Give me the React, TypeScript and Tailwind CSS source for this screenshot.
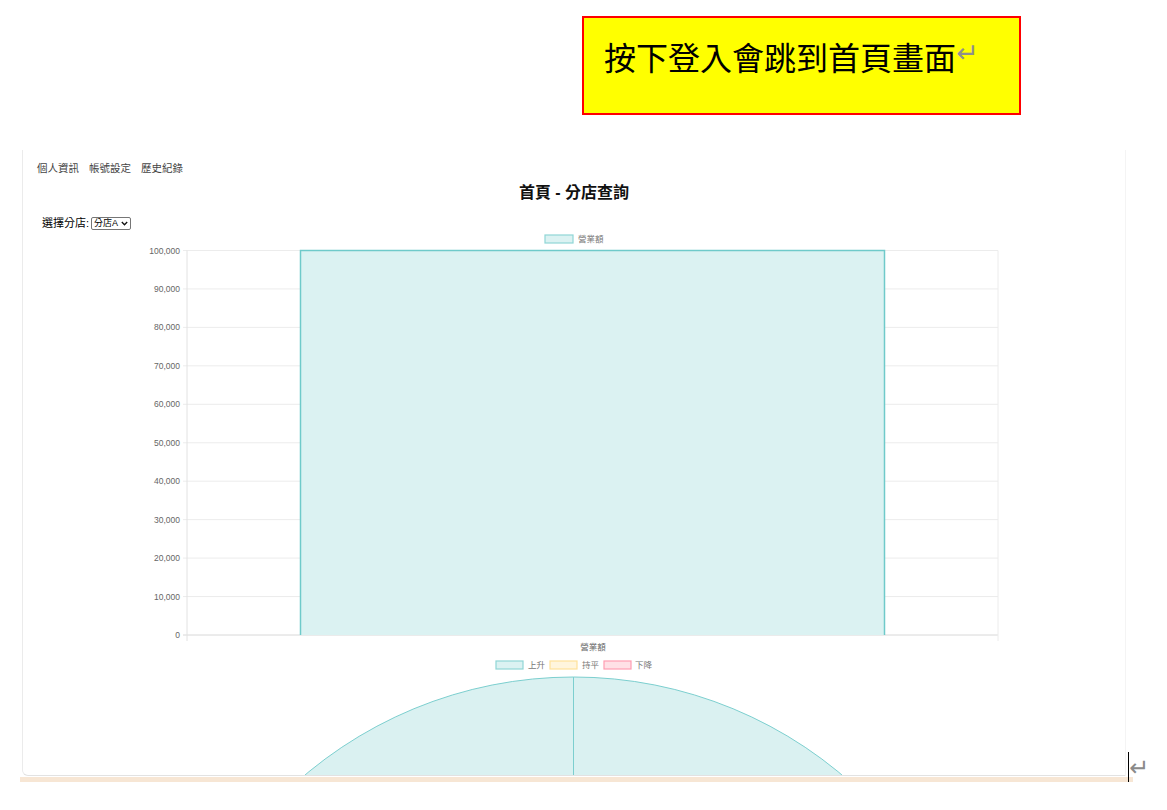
import React from 'react';

const FONT = '"Liberation Sans", "Noto Sans CJK TC", sans-serif';

// y-axis ticks, top to bottom
const ticks = ['100,000', '90,000', '80,000', '70,000', '60,000', '50,000', '40,000', '30,000', '20,000', '10,000', '0'];

const SalesChart: React.FC = () => {
  const top = 20.5;
  const step = 38.45;
  const bottom = top + step * 10;

  return (
    <svg width="1101" height="546" className="block" style={{ fontFamily: FONT }}>
      {/* legend */}
      <rect x="522" y="5" width="28" height="8" fill="#dbf2f2" stroke="#8fd6d6" strokeWidth="1.2" />
      <text x="555" y="12" fontSize="8.5" fill="#777">營業額</text>

      {/* grid */}
      {ticks.map((t, i) => {
        const y = top + i * step;
        return (
          <g key={t}>
            <line x1="160" x2="975" y1={y} y2={y} stroke={i === 10 ? '#d8d8d8' : '#ececec'} strokeWidth="1" />
            <text x="157" y={y + 3} fontSize="8.5" fill="#666" textAnchor="end">{t}</text>
          </g>
        );
      })}
      <line x1="164" x2="164" y1={top} y2={bottom + 6} stroke="#e2e2e2" strokeWidth="1" />
      <line x1="975" x2="975" y1={top} y2={bottom + 6} stroke="#ececec" strokeWidth="1" />

      {/* bar */}
      <rect x="277.5" y={top} width="584" height={bottom - top} fill="#dbf2f2" />
      <path d={`M277.5 ${bottom} V${top} H861.5 V${bottom}`} fill="none" stroke="#6fcaca" strokeWidth="1.5" />

      <text x="570" y="420" fontSize="8.5" fill="#666" textAnchor="middle">營業額</text>

      {/* pie legend */}
      <rect x="473" y="431" width="27" height="8" fill="#dbf2f2" stroke="#8fd6d6" strokeWidth="1.2" />
      <text x="505" y="438" fontSize="8.5" fill="#777">上升</text>
      <rect x="527" y="431" width="27" height="8" fill="#fff5dd" stroke="#ffe19a" strokeWidth="1.2" />
      <text x="559" y="438" fontSize="8.5" fill="#777">持平</text>
      <rect x="581" y="431" width="27" height="8" fill="#ffe0e6" stroke="#ff9db2" strokeWidth="1.2" />
      <text x="612" y="438" fontSize="8.5" fill="#777">下降</text>

      {/* pie */}
      <circle cx="550.5" cy="864" r="417" fill="#daf1f1" stroke="#7ccfcf" strokeWidth="1" />
      <line x1="550.5" x2="550.5" y1="447" y2="864" stroke="#7ccfcf" strokeWidth="1" />
    </svg>
  );
};

export default function App() {
  return (
    <div className="relative w-[1167px] h-[810px] overflow-hidden bg-white" style={{ fontFamily: FONT }}>
      {/* note box */}
      <div className="pt-[16px] pl-[582px]">
        <div className="w-[439px] h-[99px] border-2 border-[#ff0000] bg-[#ffff00] pl-[20px] pt-[21px]">
          <div className="flex items-center text-[32px] leading-[34px] text-black">
            <span style={{ fontFamily: '"Noto Sans CJK TC", serif' }}>按下登入會跳到首頁畫面</span>
            <span className="text-[27px] text-[#8f8f8f] -mt-[6px]" style={{ fontFamily: '"DejaVu Sans", sans-serif' }}>↵</span>
          </div>
        </div>
      </div>

      {/* screenshot */}
      <div className="mt-[35px] ml-[20px] w-[1113px]">
        <div className="ml-[2px] w-[1104px] h-[626px] overflow-hidden border-l border-r border-b border-l-[#ebebeb] border-r-[#f4f4f4] border-b-[#e2e2e2] rounded-bl-[6px]">
          <div className="flex gap-[10px] pt-[12px] pl-[14px] text-[10.5px] leading-[13px] text-[#444]">
            <span>個人資訊</span>
            <span>帳號設定</span>
            <span>歷史紀錄</span>
          </div>
          <div className="mt-[8px] text-center text-[16px] leading-[20px] font-bold text-[#111]">首頁 - 分店查詢</div>
          <div className="mt-[13px] pl-[19px] flex items-center gap-[2px] h-[14px] text-[11px] text-black">
            <span>選擇分店:</span>
            <div className="flex items-center gap-[2px] h-[13px] w-[40px] border border-[#767676] rounded-[2px] px-[2px] text-[9px] leading-[11px]">
              <span>分店A</span>
              <svg width="7" height="5" viewBox="0 0 7 5" className="ml-[1px]">
                <path d="M0.8 1 L3.5 3.8 L6.2 1" fill="none" stroke="#111" strokeWidth="1.3" />
              </svg>
            </div>
          </div>
          <SalesChart />
        </div>
        <div className="mt-[1px] h-[5px] bg-[#f7e6d4]" />
      </div>

      {/* word cursor + paragraph mark */}
      <div className="absolute left-[1128px] top-[752px] w-px h-[30px] bg-black" />
      <span className="absolute left-[1129px] top-[755px] text-[24px] leading-[26px] text-[#8a8a8a]" style={{ fontFamily: '"DejaVu Sans", sans-serif' }}>↵</span>
    </div>
  );
}
